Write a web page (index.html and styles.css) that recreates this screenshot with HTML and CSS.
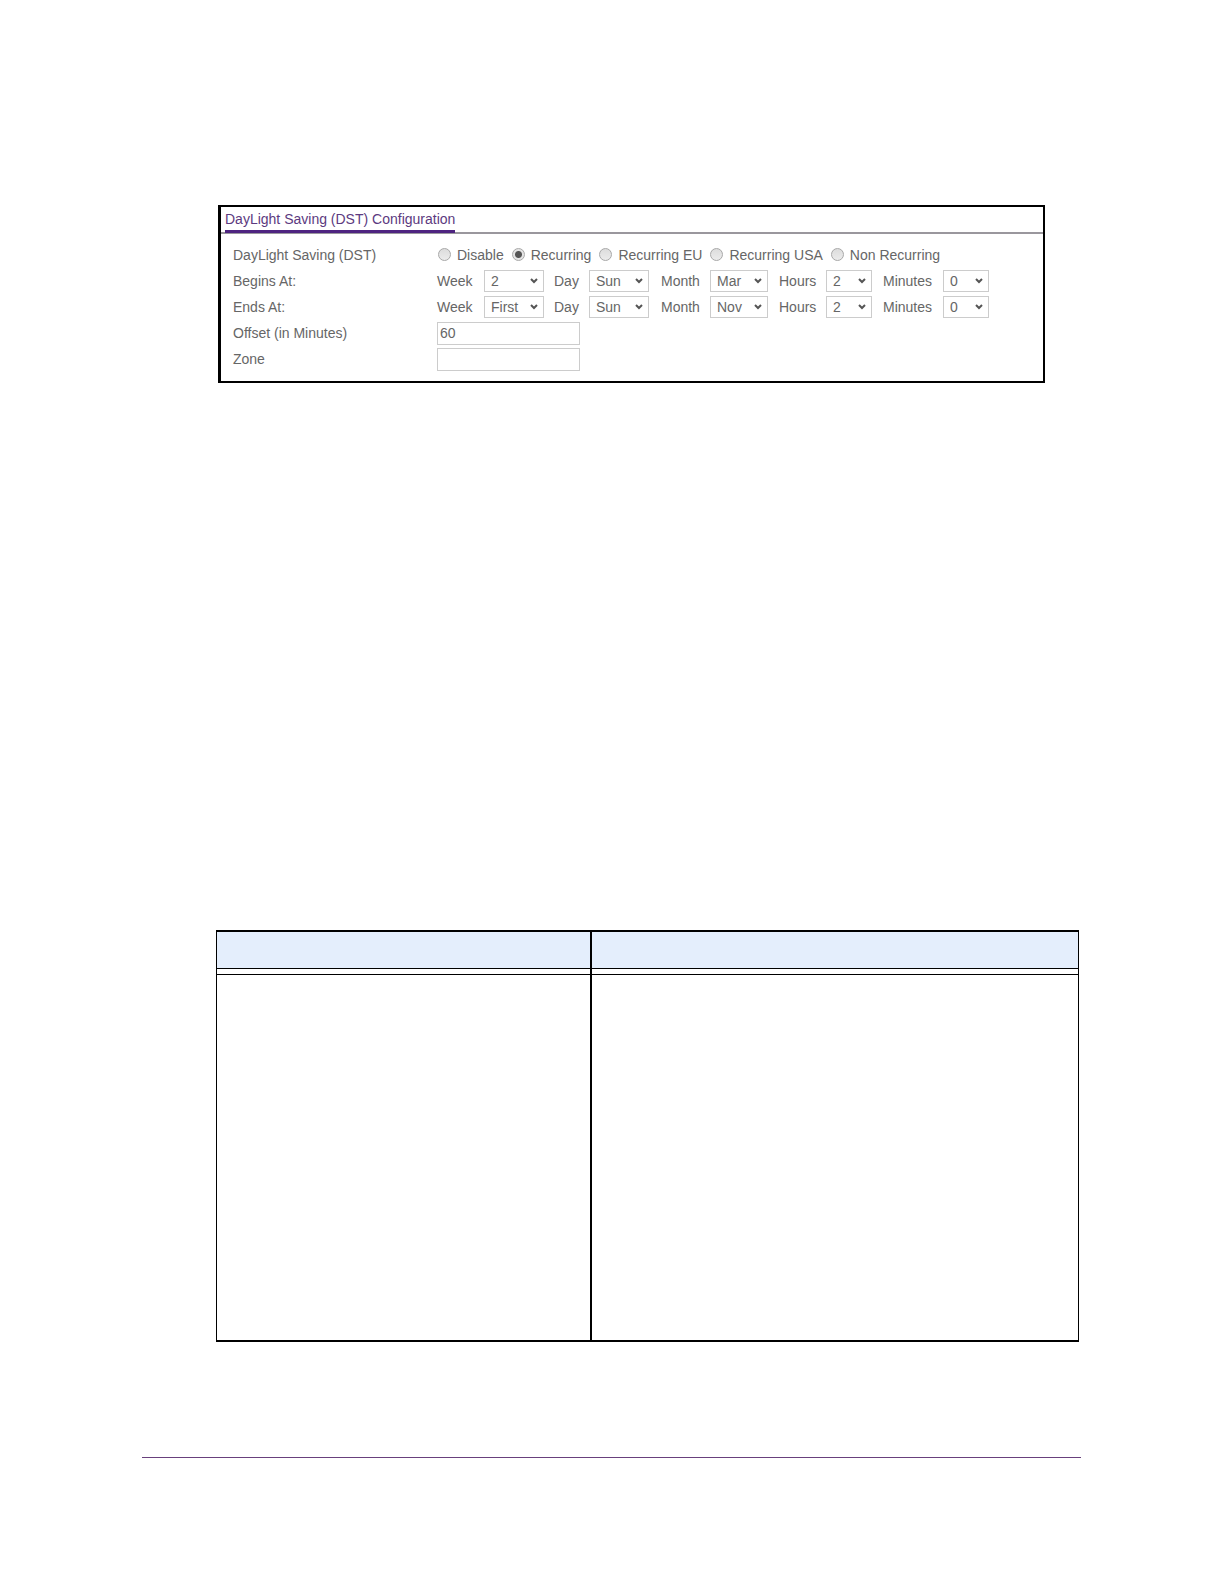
FILE: index.html
```html
<!DOCTYPE html>
<html lang="en">
<head>
    <meta charset="UTF-8">
    <meta name="viewport" content="width=device-width, initial-scale=1.0">
    <title>DayLight Saving (DST) Configuration</title>
    <link rel="stylesheet" href="styles.css">
</head>
<body>
    <div class="page">
        <form class="panel">
            <div class="panel-header">
                <h2>DayLight Saving (DST) Configuration</h2>
            </div>
            <div class="panel-body">
                <div class="form-row">
                    <span class="row-label" id="dstLabel">DayLight Saving (DST)</span>
                    <div class="radios" role="radiogroup" aria-labelledby="dstLabel">
                        <label><input type="radio" name="dst" value="disable">Disable</label>
                        <label><input type="radio" name="dst" value="recurring" checked>Recurring</label>
                        <label><input type="radio" name="dst" value="eu">Recurring EU</label>
                        <label><input type="radio" name="dst" value="usa">Recurring USA</label>
                        <label><input type="radio" name="dst" value="non">Non Recurring</label>
                    </div>
                </div>
                <div class="form-row">
                    <span class="row-label">Begins At:</span>
                    <div class="time-fields">
                        <label for="beginWeek">Week</label>
                        <select id="beginWeek" class="wide"><option>2</option></select>
                        <label for="beginDay">Day</label>
                        <select id="beginDay" class="wide"><option>Sun</option></select>
                        <label for="beginMonth">Month</label>
                        <select id="beginMonth" class="month"><option>Mar</option></select>
                        <label for="beginHours">Hours</label>
                        <select id="beginHours"><option>2</option></select>
                        <label for="beginMinutes">Minutes</label>
                        <select id="beginMinutes"><option>0</option></select>
                    </div>
                </div>
                <div class="form-row">
                    <span class="row-label">Ends At:</span>
                    <div class="time-fields">
                        <label for="endWeek">Week</label>
                        <select id="endWeek" class="wide"><option>First</option></select>
                        <label for="endDay">Day</label>
                        <select id="endDay" class="wide"><option>Sun</option></select>
                        <label for="endMonth">Month</label>
                        <select id="endMonth" class="month"><option>Nov</option></select>
                        <label for="endHours">Hours</label>
                        <select id="endHours"><option>2</option></select>
                        <label for="endMinutes">Minutes</label>
                        <select id="endMinutes"><option>0</option></select>
                    </div>
                </div>
                <div class="form-row">
                    <label class="row-label" for="offset">Offset (in Minutes)</label>
                    <input type="text" id="offset" name="offset" value="60">
                </div>
                <div class="form-row">
                    <label class="row-label" for="zone">Zone</label>
                    <input type="text" id="zone" name="zone">
                </div>
            </div>
        </form>

        <table class="fields">
            <thead>
                <tr><th class="field-col"></th><th></th></tr>
            </thead>
            <tbody>
                <tr><td></td><td></td></tr>
            </tbody>
        </table>

        <hr class="footer-line">
    </div>
</body>
</html>
```

FILE: styles.css
```css
* {
    box-sizing: border-box;
}
body {
    margin: 0;
    background-color: #fff;
    color: #666;
    font-family: "Liberation Sans", Arial, sans-serif;
    font-size: 14px;
}
.page {
    padding: 205px 143px 126px 142px;
}

/* DST settings */
.panel {
    margin: 0 36px 0 76px;
    border: 2px solid #000;
    border-left-width: 3px;
}
.panel-header {
    display: flex;
    padding-left: 4px;
    border-bottom: 2px solid #9a979d;
}
.panel-header h2 {
    margin: 0 0 -1px;
    padding-top: 2px;
    border-bottom: 3px solid #4e2480;
    color: #5c3a80;
    font-size: 14px;
    font-weight: normal;
    line-height: 21px;
}
.panel-body {
    padding: 8px 12px 9px;
}
.form-row {
    display: grid;
    grid-template-columns: 204px 1fr;
    align-items: center;
    height: 26px;
}
.radios {
    display: flex;
    gap: 7px;
}
.radios label {
    display: flex;
    align-items: center;
    gap: 6px;
    white-space: nowrap;
}
input[type="radio"] {
    appearance: none;
    width: 13px;
    height: 13px;
    margin: 0 0 2px 1px;
    border: 1px solid #a8a8a8;
    border-radius: 50%;
    background: linear-gradient(#dcdcdc, #ececec);
}
input[type="radio"]:checked {
    background: radial-gradient(circle, #555 0, #555 3px, #e4e4e4 4px);
}
.time-fields {
    display: grid;
    grid-template-columns: 47px 70px 35px 72px 49px 69px 47px 57px 60px 46px;
    align-items: center;
}
select,
input[type="text"] {
    border: 1px solid #ccc;
    border-radius: 0;
    background-color: #fff;
    color: #666;
    font-family: inherit;
    font-size: 14px;
}
select {
    appearance: none;
    width: 46px;
    height: 22px;
    padding: 0 6px;
    background-image: url("data:image/svg+xml,%3Csvg xmlns='http://www.w3.org/2000/svg' width='8' height='6'%3E%3Cpath d='M1 1l3 3 3-3' fill='none' stroke='%23555' stroke-width='2'/%3E%3C/svg%3E");
    background-repeat: no-repeat;
    background-position: right 5px center;
}
select.wide {
    width: 60px;
}
select.month {
    width: 58px;
}
input[type="text"] {
    width: 143px;
    height: 23px;
    padding: 0 2px;
}

/* field description table */
.fields {
    width: calc(100% - 76px);
    margin: 547px 2px 0 74px;
    border: 1px solid #000;
    border-width: 2px 1px;
    border-spacing: 0;
    table-layout: fixed;
}
.fields th,
.fields td {
    padding: 0;
}
.fields th {
    height: 37px;
    border-bottom: 1px solid #000;
    background-color: #e4eefc;
}
.fields td {
    height: 371px;
    vertical-align: top;
}
.fields td::before {
    content: "";
    display: block;
    height: 5px;
    border-bottom: 1px solid #000;
}
.fields .field-col {
    width: 43.5%;
}
.fields th:first-child,
.fields td:first-child {
    border-right: 2px solid #000;
}
.footer-line {
    height: 1px;
    margin: 115px 0 0;
    border: 0;
    background-color: #68407c;
}
```
